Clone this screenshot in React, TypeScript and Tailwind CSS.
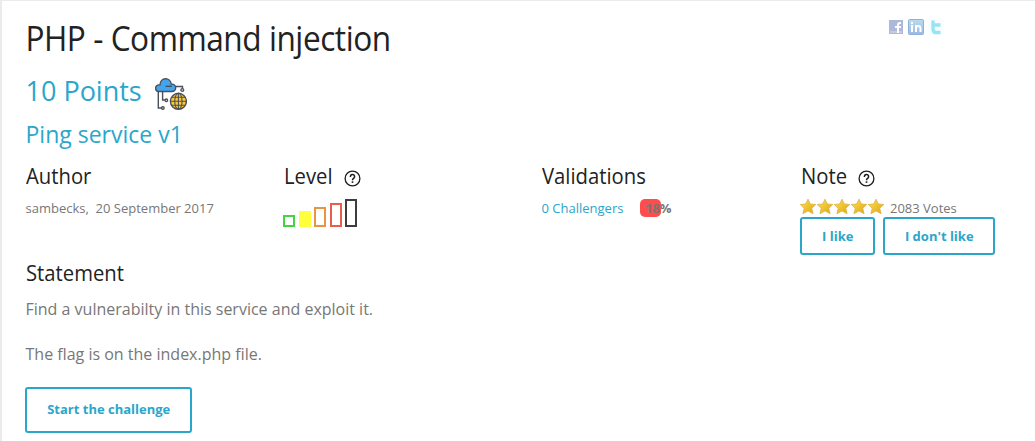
import type { ReactNode } from "react";

function Heading({ children, icon }: { children: ReactNode; icon?: ReactNode }) {
  return (
    <h4 className="flex h-[30px] items-center gap-[10px] whitespace-nowrap pl-[0.5px] text-[21px] leading-[30px] text-[#222]">
      <span className="origin-left scale-x-[0.965]">{children}</span>
      {icon}
    </h4>
  );
}

function HelpIcon() {
  return (
    <svg className="mt-[5px] h-[17px] w-[17px] shrink-0" viewBox="0 0 17 17" fill="none" stroke="#1d1d1d">
      <circle cx="8.5" cy="8.5" r="7.4" strokeWidth="1.3" />
      <path d="M6.4 7V6.5a2.1 2.1 0 1 1 3.5 1.6c-.8.6-1.4 1-1.4 2.1" strokeWidth="1.5" />
      <path d="M8.5 11.3v1.6" strokeWidth="1.6" />
    </svg>
  );
}

function NetworkIcon() {
  return (
    <svg className="mt-[6px] h-8 w-8" viewBox="0 0 32 32" fill="none" stroke="#4b5058" strokeWidth="1.4">
      <path d="M3.3 13v17h3M7.6 13v9h2.2M20 8.5h7.5v2" />
      <circle cx="7.8" cy="30" r="1.3" />
      <circle cx="11.3" cy="22.3" r="1.3" />
      <circle cx="27.3" cy="12" r="1.4" />
      <path d="M4 13.5a3.3 3.3 0 0 1-.2-6.6H5C5 3 7.5.8 10.5.8s5.500 2.100 5.700 5.300h.8a3.700 3.700 0 0 1 0 7.400z" fill="#42a5f0" />
      <path d="M10.5 8.3H17" />
      <circle cx="23.4" cy="23.3" r="8" fill="#fcc93b" />
      <ellipse cx="23.4" cy="23.3" rx="3.7" ry="8" strokeWidth="1.1" />
      <path d="M23.4 15.3v16M15.4 23.3h16M17 19.3h12.8M17 27.3h12.8" strokeWidth="1.1" />
    </svg>
  );
}

function SocialIcons() {
  return (
    <div className="flex h-4 items-center gap-1">
      <svg className="h-4 w-4" viewBox="0 0 16 16">
        <path d="M1 1h14v14H1z" fill="#adb9d8" />
        <path d="M2 12h12v2H2z" fill="#c3cce2" />
        <path d="M13 4h-1c-1.5 0-2 .7-2 2v8M7 8h6" fill="none" stroke="#fff" strokeWidth="2" />
      </svg>
      <svg className="h-4 w-4" viewBox="0 0 16 16">
        <defs>
          <linearGradient id="linkedin" x1="0" y1="0" x2="0" y2="1">
            <stop stopColor="#b9dcf0" />
            <stop offset="1" stopColor="#9db9e2" />
          </linearGradient>
        </defs>
        <rect x=".5" y=".5" width="15" height="15" rx="1" fill="url(#linkedin)" stroke="#8fb0db" />
        <path d="M4 6v7M4 3v2M8 13V6M8 9.5c0-3.3 4.5-3.3 4.5 0V13" fill="none" stroke="#fff" strokeWidth="2" />
      </svg>
      <svg className="h-4 w-4" viewBox="0 0 16 16">
        <rect width="16" height="16" rx="2" fill="#fafdff" />
        <path d="M5 1.5v8.2c0 2.300 1 3.800 3 3.800h4.500M5 6h7.500" fill="none" stroke="#96e5f4" strokeWidth="3.4" strokeLinejoin="round" />
      </svg>
    </div>
  );
}

function Stars() {
  return (
    <div className="-mt-[3px] flex">
      {[0, 1, 2, 3, 4].map((i) => (
        <svg key={i} className="h-[17px] w-[17px]" viewBox="0 0 17 17">
          <defs>
            <linearGradient id={`star${i}`} x1="0" y1="0" x2="1" y2="1">
              <stop stopColor="#ffe34d" />
              <stop offset="1" stopColor="#dfa313" />
            </linearGradient>
          </defs>
          <path
            d="m8 1.2 2.3 4.8 5.5.5-4 3.7 1.3 5.5L8 12.9l-5.1 2.8 1.3-5.5-4-3.7 5.500-.5z"
            fill={`url(#star${i})`}
            stroke="#dcb142"
            strokeWidth=".8"
            strokeLinejoin="round"
          />
        </svg>
      ))}
    </div>
  );
}

function LevelBars() {
  return (
    <div className="mt-[8px] flex h-7 items-end gap-1">
      <span className="h-3 w-3 border-2 border-[#41d63f]" />
      <span className="h-4 w-3 bg-[#ffff3c]" />
      <span className="-ml-px h-5 w-3 border-2 border-[#e79544]" />
      <span className="h-6 w-3 border-2 border-[#e65f4b]" />
      <span className="-ml-px h-7 w-3 border-2 border-[#3d3d3d]" />
    </div>
  );
}

function OutlineButton({ children, className }: { children: ReactNode; className: string }) {
  return (
    <button className={`flex items-center justify-center whitespace-nowrap rounded-[3px] border-2 border-[#2ba6cb] pl-[0.5px] text-[13px] font-bold text-[#2ba6cb] ${className}`}>
      {children}
    </button>
  );
}

export default function App() {
  return (
    <main className="h-[441px] overflow-hidden border-l-2 border-t border-[#ebebeb] bg-white pl-[23px] font-['Open_Sans','Noto_Sans',sans-serif] text-[#777]">
      <header className="flex h-[57px] items-start justify-between pr-[91px]">
        <h1 className="mt-4 origin-left scale-x-[0.93] whitespace-nowrap pl-[0.5px] text-[34px] leading-[42px] tracking-[-0.5px] text-[#222]">
          PHP - Command injection
        </h1>
        <div className="mt-[18px]">
          <SocialIcons />
        </div>
      </header>
      <div className="flex h-[55px] items-center gap-[13px] pl-[0.5px] pt-[11px] text-[27px] text-[#2ba6cb]">
        <span>10 Points</span>
        <NetworkIcon />
      </div>
      <h3 className="h-[48px] whitespace-nowrap pl-[0.5px] pt-px text-[23px] leading-[40px] text-[#2ba6cb]">Ping service v1</h3>
      <section className="grid h-[97px] grid-cols-[258px_258.5px_258.5px_1fr] text-[13px] leading-[18px]">
        <div>
          <Heading>Author</Heading>
          <p className="mt-[8px] whitespace-pre pl-[0.5px]">sambecks,  20 September 2017</p>
        </div>
        <div>
          <Heading icon={<HelpIcon />}>Level</Heading>
          <LevelBars />
        </div>
        <div>
          <Heading>Validations</Heading>
          <div className="mt-[8px] flex items-center">
            <a className="text-[#2ba6cb]">0 Challengers</a>
            <div className="ml-[16.5px] h-[18px] w-[21px] whitespace-nowrap rounded-[5px] bg-[#ff4c4c] pl-[5px] font-bold">18%</div>
          </div>
        </div>
        <div>
          <Heading icon={<HelpIcon />}>Note</Heading>
          <div className="mt-[8px] flex items-center gap-[5px]">
            <Stars />
            <span>2083 Votes</span>
          </div>
          <div className="flex gap-2">
            <OutlineButton className="h-[38px] w-[75px]">I like</OutlineButton>
            <OutlineButton className="h-[38px] w-[112px]">I don't like</OutlineButton>
          </div>
        </div>
      </section>
      <section>
        <Heading>Statement</Heading>
        <div className="mt-[9px] flex flex-col gap-[21px] pl-[0.5px] text-base leading-6">
          <p>Find a vulnerabilty in this service and exploit it.</p>
          <p>The flag is on the index.php file.</p>
        </div>
        <OutlineButton className="mt-[21px] h-[46px] w-[167px]">Start the challenge</OutlineButton>
      </section>
    </main>
  );
}
